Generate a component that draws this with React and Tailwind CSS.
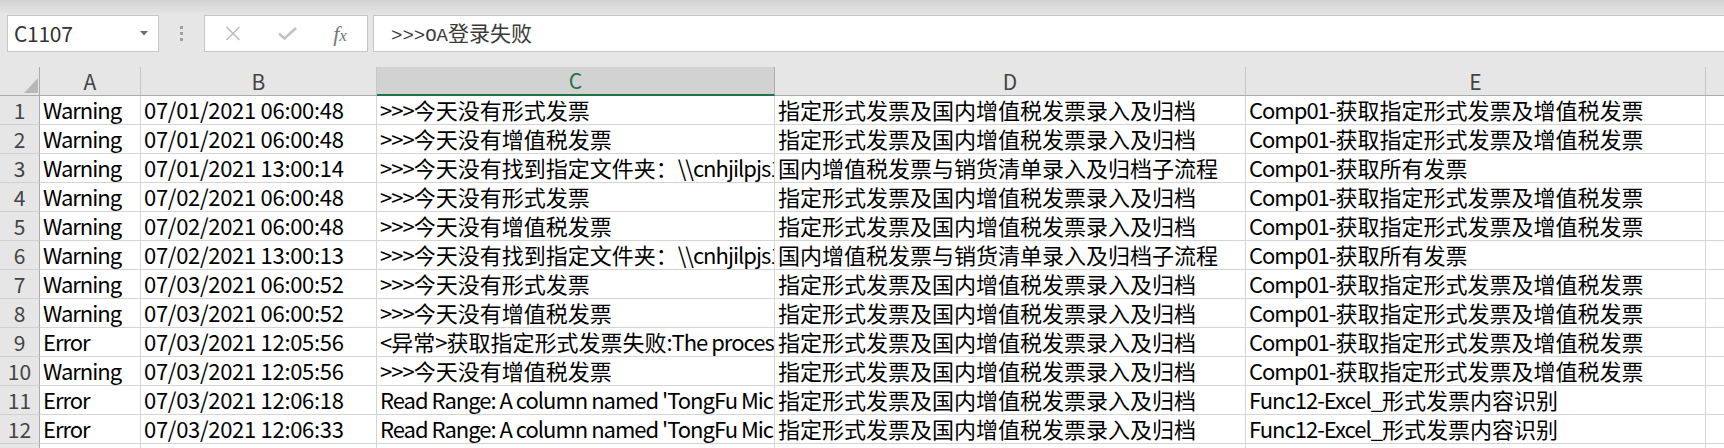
import React from 'react';

const FONT = { fontFamily: '"Noto Sans CJK SC", "Noto Sans", sans-serif' };

const D1 = '指定形式发票及国内增值税发票录入及归档';
const D2 = '国内增值税发票与销货清单录入及归档子流程';
const E1 = 'Comp01-获取指定形式发票及增值税发票';
const E2 = 'Comp01-获取所有发票';
const E3 = 'Func12-Excel_形式发票内容识别';
const C3 = '>>>今天没有找到指定文件夹：\\\\cnhjilpjs1\\RPA\\Invoice';
const C9 = "<异常>获取指定形式发票失败:The process cannot access the file";
const C11 = "Read Range: A column named 'TongFu Microelectronics' does not belong to table";

const rows = [
  ['Warning', '07/01/2021 06:00:48', '>>>今天没有形式发票', D1, E1],
  ['Warning', '07/01/2021 06:00:48', '>>>今天没有增值税发票', D1, E1],
  ['Warning', '07/01/2021 13:00:14', C3, D2, E2],
  ['Warning', '07/02/2021 06:00:48', '>>>今天没有形式发票', D1, E1],
  ['Warning', '07/02/2021 06:00:48', '>>>今天没有增值税发票', D1, E1],
  ['Warning', '07/02/2021 13:00:13', C3, D2, E2],
  ['Warning', '07/03/2021 06:00:52', '>>>今天没有形式发票', D1, E1],
  ['Warning', '07/03/2021 06:00:52', '>>>今天没有增值税发票', D1, E1],
  ['Error', '07/03/2021 12:05:56', C9, D1, E1],
  ['Warning', '07/03/2021 12:05:56', '>>>今天没有增值税发票', D1, E1],
  ['Error', '07/03/2021 12:06:18', C11, D1, E3],
  ['Error', '07/03/2021 12:06:33', C11, D1, E3],
  ['Error', '07/03/2021 12:06:40', C11, D1, E3],
];

const widths = ['w-[101px]', 'w-[236px]', 'w-[398px]', 'w-[471px]', 'w-[460px]'];

// latin runs get squeezed a bit so they sit closer to Calibri's widths
const CJK = /([\u3000-\u9fff\uff00-\uffef]+)/;

function CellText({ text, date }) {
  return text.split(CJK).filter(Boolean).map((part, i) =>
    CJK.test(part) ? (
      <span key={i}>{part}</span>
    ) : (
      <span key={i} className={date ? 'tracking-[-0.3px]' : 'tracking-[-1px]'}>{part}</span>
    )
  );
}

function FormulaBar() {
  return (
    <div className="flex h-[37px]">
      <div className="ml-[7px] w-[152px] flex items-center justify-between border border-[#c6c6c6] bg-white pl-[6px] pr-[10px]">
        <span className="text-[21px] text-[#333] tracking-[-0.3px]">C1107</span>
        <svg width="8" height="5" viewBox="0 0 8 5">
          <polygon points="0,0 8,0 4,4.5" fill="#6f6f6f" />
        </svg>
      </div>
      <div className="w-[45px] flex flex-col items-center justify-center gap-[3px]">
        <span className="block w-[3px] h-[3px] bg-[#a0a0a0]" />
        <span className="block w-[3px] h-[3px] bg-[#a0a0a0]" />
        <span className="block w-[3px] h-[3px] bg-[#a0a0a0]" />
      </div>
      <div className="w-[164px] flex items-center border border-[#c6c6c6] bg-white">
        <div className="w-[56px] flex justify-center">
          <svg width="16" height="15" viewBox="0 0 16 15">
            <path d="M1.5 1 L14.5 14 M14.5 1 L1.5 14" stroke="#bdbdbd" strokeWidth="1.6" fill="none" />
          </svg>
        </div>
        <div className="w-[52px] flex justify-center">
          <svg width="19" height="13" viewBox="0 0 19 13">
            <path d="M1 6.5 L6.5 11.5 L18 1" stroke="#c2c2c2" strokeWidth="2.6" fill="none" />
          </svg>
        </div>
        <div className="w-[54px] flex justify-center">
          <span className="italic text-[22px] text-[#767676] leading-none" style={{ fontFamily: '"Liberation Serif", serif' }}>
            f<span className="text-[17px]">x</span>
          </span>
        </div>
      </div>
      <div className="ml-[5px] flex-1 flex items-center border-y border-l border-[#c6c6c6] bg-white pl-[17px]">
        <span className="text-[21px] text-[#3a3a3a]">
          <span className="text-[19px]" style={{ fontFamily: '"Liberation Mono", monospace' }}>&gt;&gt;&gt;OA</span>登录失败
        </span>
      </div>
    </div>
  );
}

function HeaderRow() {
  const cols = ['A', 'B', 'C', 'D', 'E'];
  return (
    <div className="flex h-[29px] text-[21px] text-[#444]">
      <div className="relative w-[40px] border-r border-b border-[#ababab]">
        <svg className="absolute right-[1px] bottom-[2px]" width="14" height="15" viewBox="0 0 14 15">
          <polygon points="14,0 14,15 0,15" fill="#b8b8b8" />
        </svg>
      </div>
      {cols.map((c, i) =>
        c === 'C' ? (
          <div key={c} className={`${widths[i]} flex items-center justify-center bg-[#d2d2d2] border-r border-[#ababab] border-b-2 border-b-[#217346] text-[#217346] leading-none`}>
            {c}
          </div>
        ) : (
          <div key={c} className={`${widths[i]} flex items-center justify-center border-r border-b border-r-[#c6c6c6] border-b-[#ababab] leading-none`}>
            {c}
          </div>
        )
      )}
      <div className="flex-1 border-b border-[#ababab]" />
    </div>
  );
}

function DataRow({ n, cells }) {
  return (
    <div className="flex h-[29px]">
      <div className="w-[40px] flex items-center justify-center border-r border-r-[#ababab] border-b border-b-[#d0d0d0] bg-[#e6e6e6] text-[21px] text-[#444] leading-none pt-[1px]">
        {n}
      </div>
      {cells.map((t, i) => (
        <div key={i} className={`${widths[i]} shrink-0 overflow-hidden whitespace-nowrap border-r border-b border-[#d4d4d4] bg-white pl-[3px] text-[22px] leading-[26px] text-black`}>
          <CellText text={t} date={i === 1} />
        </div>
      ))}
      <div className="flex-1 border-b border-[#d4d4d4] bg-white" />
    </div>
  );
}

export default function App() {
  return (
    <div className="w-[1724px] h-[448px] overflow-hidden bg-[#e6e6e6]" style={FONT}>
      <div className="h-[15px] bg-linear-to-b from-[#d2d2d2] to-[#e6e6e6]" />
      <FormulaBar />
      <div className="h-[15px]" />
      <HeaderRow />
      {rows.map((r, i) => (
        <DataRow key={i} n={i + 1} cells={r} />
      ))}
    </div>
  );
}
